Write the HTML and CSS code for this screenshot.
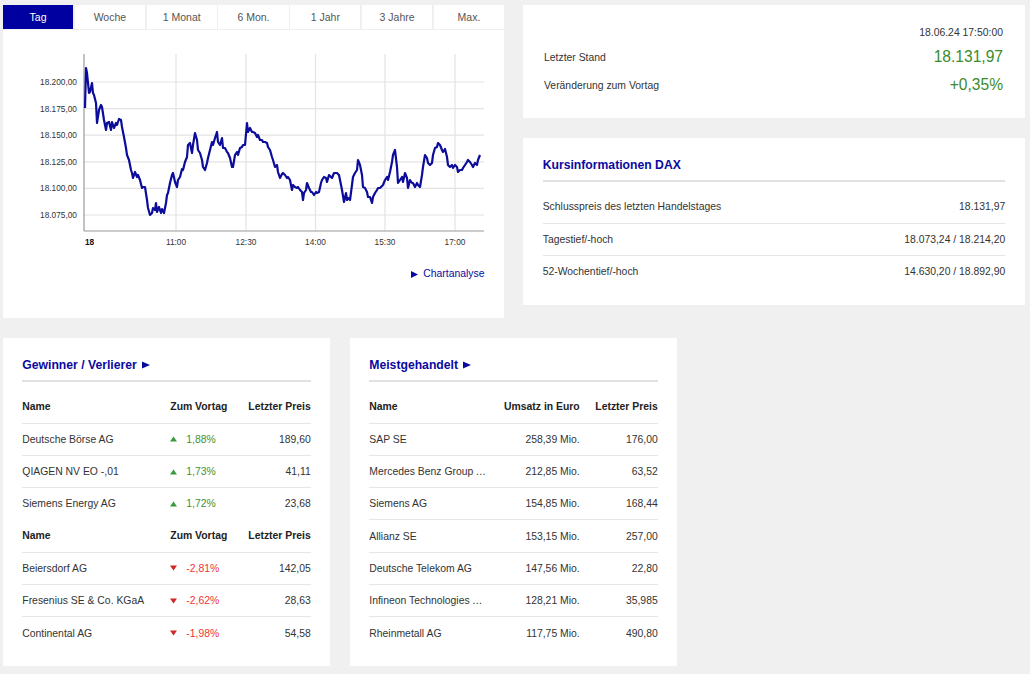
FILE: index.html
```html
<!DOCTYPE html>
<html lang="de">
<head>
<meta charset="utf-8">
<title>DAX</title>
<link rel="stylesheet" href="styles.css">
</head>
<body>
<div class="page">
  <div class="top">
    <div class="leftcol">
      <div class="tabs">
        <div class="tab active">Tag</div>
        <div class="tab">Woche</div>
        <div class="tab">1 Monat</div>
        <div class="tab">6 Mon.</div>
        <div class="tab">1 Jahr</div>
        <div class="tab">3 Jahre</div>
        <div class="tab">Max.</div>
      </div>
      <div class="chart-panel">
        <svg class="chart" viewBox="3 30 501 225" width="501" height="225">
          <g class="grid">
            <line x1="84" y1="82" x2="484" y2="82"/>
            <line x1="84" y1="108.6" x2="484" y2="108.6"/>
            <line x1="84" y1="135.2" x2="484" y2="135.2"/>
            <line x1="84" y1="161.8" x2="484" y2="161.8"/>
            <line x1="84" y1="188.4" x2="484" y2="188.4"/>
            <line x1="84" y1="215" x2="484" y2="215"/>
            <line x1="176" y1="54" x2="176" y2="231"/>
            <line x1="246" y1="54" x2="246" y2="231"/>
            <line x1="315.5" y1="54" x2="315.5" y2="231"/>
            <line x1="385" y1="54" x2="385" y2="231"/>
            <line x1="455" y1="54" x2="455" y2="231"/>
          </g>
          <g class="axis">
            <line x1="84" y1="54" x2="84" y2="231"/>
            <line x1="84" y1="231" x2="484" y2="231"/>
          </g>
          <g class="ylab">
            <text x="77" y="85">18.200,00</text>
            <text x="77" y="111.6">18.175,00</text>
            <text x="77" y="138.2">18.150,00</text>
            <text x="77" y="164.8">18.125,00</text>
            <text x="77" y="191.4">18.100,00</text>
            <text x="77" y="218">18.075,00</text>
          </g>
          <g class="xlab">
            <text class="day" x="85" y="244.5">18</text>
            <text x="176" y="244.5">11:00</text>
            <text x="246" y="244.5">12:30</text>
            <text x="315.5" y="244.5">14:00</text>
            <text x="385" y="244.5">15:30</text>
            <text x="455" y="244.5">17:00</text>
          </g>
          <polyline class="line" points="85,108 86,68 87,73 89,93 90,92 92,83 93,93 94,95 96,103 97,123 99,110 101,105 102,107 104,120 106,130 107,123 109,122 111,130 112,122 114,128 116,123 117,125 119,119 121,120 122,127 124,137 126,148 127,155 129,160 131,170 132,173 133,178 135,172 137,177 138,175 140,180 142,188 143,187 145,187 147,200 148,208 150,215 152,213 153,208 155,210 156,203 157,212 159,207 161,213 162,209 164,213 166,203 167,195 168,193 170,183 172,175 173,173 175,182 177,187 178,180 180,177 182,169 183,170 185,162 187,157 188,145 190,143 192,153 193,145 195,133 197,140 198,150 200,153 202,160 203,167 205,170 207,163 208,158 210,150 212,142 213,145 215,138 217,132 218,142 220,145 222,138 223,148 225,148 227,152 228,153 230,158 232,167 233,167 235,155 237,152 238,155 240,148 242,147 243,145 245,145 247,123 248,132 250,128 252,132 253,132 255,133 257,137 258,135 260,140 262,140 263,142 265,142 267,143 268,147 270,150 272,157 273,160 275,167 277,165 278,172 280,178 282,174 283,173 285,175 287,178 288,177 290,180 292,190 293,185 295,187 297,188 298,187 300,190 302,192 303,200 304,193 306,190 307,183 309,188 311,192 312,192 314,195 316,192 317,193 319,192 321,183 322,180 324,177 326,178 327,182 329,175 331,177 332,178 334,173 336,173 337,173 339,175 341,185 342,190 344,202 346,193 347,200 348,198 350,200 352,185 353,177 355,173 357,170 358,160 360,165 362,175 363,187 365,188 367,192 368,197 370,197 372,203 373,197 375,193 377,190 378,188 380,188 382,186 383,185 385,180 387,177 388,180 390,172 392,162 393,155 395,150 397,167 398,183 400,180 402,177 403,182 405,173 407,178 408,188 410,180 412,183 413,183 415,187 417,183 418,185 420,187 422,175 423,167 425,155 427,158 428,163 430,165 432,163 433,155 435,148 437,147 438,143 440,145 442,150 443,152 445,149 447,157 448,165 450,167 452,165 453,168 455,165 457,167 458,172 460,170 462,170 463,168 465,165 467,162 468,160 470,162 472,165 473,167 475,163 477,165 478,160 480,155"/>
        </svg>
        <div class="chart-link">
          <svg class="tri-r" width="7" height="7" viewBox="0 0 7 7"><polygon points="0,0 7,3.5 0,7"/></svg>
          <span>Chartanalyse</span>
        </div>
      </div>
    </div>
    <div class="rightcol">
      <div class="card quote">
        <div class="date">18.06.24 17:50:00</div>
        <div class="qrow qrow1"><span>Letzter Stand</span><span class="big">18.131,97</span></div>
        <div class="qrow qrow2"><span>Veränderung zum Vortag</span><span class="big">+0,35%</span></div>
      </div>
      <div class="card info">
        <div class="ctitle">Kursinformationen DAX</div>
        <div class="list">
          <div class="irow"><span>Schlusspreis des letzten Handelstages</span><span>18.131,97</span></div>
          <div class="irow"><span>Tagestief/-hoch</span><span>18.073,24 / 18.214,20</span></div>
          <div class="irow"><span>52-Wochentief/-hoch</span><span>14.630,20 / 18.892,90</span></div>
        </div>
      </div>
    </div>
  </div>

  <div class="bottom">
    <div class="card tcard gv">
      <div class="ctitle">Gewinner / Verlierer <svg class="tri-t" width="8" height="8" viewBox="0 0 8 8"><polygon points="0,0.5 8,4 0,7.5"/></svg></div>
      <div class="list">
        <div class="trow th"><span>Name</span><span>Zum Vortag</span><span class="r">Letzter Preis</span></div>
        <div class="trow"><span>Deutsche Börse AG</span><span class="chg up"><svg width="7" height="6" viewBox="0 0 7 6"><polygon points="3.5,0.5 7,5.5 0,5.5"/></svg>1,88%</span><span class="r">189,60</span></div>
        <div class="trow"><span>QIAGEN NV EO -,01</span><span class="chg up"><svg width="7" height="6" viewBox="0 0 7 6"><polygon points="3.5,0.5 7,5.5 0,5.5"/></svg>1,73%</span><span class="r">41,11</span></div>
        <div class="trow"><span>Siemens Energy AG</span><span class="chg up"><svg width="7" height="6" viewBox="0 0 7 6"><polygon points="3.5,0.5 7,5.5 0,5.5"/></svg>1,72%</span><span class="r">23,68</span></div>
        <div class="trow th noline"><span>Name</span><span>Zum Vortag</span><span class="r">Letzter Preis</span></div>
        <div class="trow"><span>Beiersdorf AG</span><span class="chg down"><svg width="7" height="6" viewBox="0 0 7 6"><polygon points="0,0.5 7,0.5 3.5,5.5"/></svg>-2,81%</span><span class="r">142,05</span></div>
        <div class="trow"><span>Fresenius SE &amp; Co. KGaA</span><span class="chg down"><svg width="7" height="6" viewBox="0 0 7 6"><polygon points="0,0.5 7,0.5 3.5,5.5"/></svg>-2,62%</span><span class="r">28,63</span></div>
        <div class="trow"><span>Continental AG</span><span class="chg down"><svg width="7" height="6" viewBox="0 0 7 6"><polygon points="0,0.5 7,0.5 3.5,5.5"/></svg>-1,98%</span><span class="r">54,58</span></div>
      </div>
    </div>
    <div class="card tcard mg">
      <div class="ctitle">Meistgehandelt <svg class="tri-t" width="8" height="8" viewBox="0 0 8 8"><polygon points="0,0.5 8,4 0,7.5"/></svg></div>
      <div class="list">
        <div class="trow th"><span>Name</span><span class="r">Umsatz in Euro</span><span class="r">Letzter Preis</span></div>
        <div class="trow"><span class="nm">SAP SE</span><span class="r">258,39 Mio.</span><span class="r">176,00</span></div>
        <div class="trow"><span class="nm">Mercedes Benz Group AG</span><span class="r">212,85 Mio.</span><span class="r">63,52</span></div>
        <div class="trow"><span class="nm">Siemens AG</span><span class="r">154,85 Mio.</span><span class="r">168,44</span></div>
        <div class="trow"><span class="nm">Allianz SE</span><span class="r">153,15 Mio.</span><span class="r">257,00</span></div>
        <div class="trow"><span class="nm">Deutsche Telekom AG</span><span class="r">147,56 Mio.</span><span class="r">22,80</span></div>
        <div class="trow"><span class="nm">Infineon Technologies AG</span><span class="r">128,21 Mio.</span><span class="r">35,985</span></div>
        <div class="trow"><span class="nm">Rheinmetall AG</span><span class="r">117,75 Mio.</span><span class="r">490,80</span></div>
      </div>
    </div>
  </div>
</div>
</body>
</html>
```

FILE: styles.css
```css
* { box-sizing: border-box; margin: 0; padding: 0; }

body {
  background: #f0f0f0;
  font-family: "Liberation Sans", Arial, sans-serif;
  font-size: 10.4px;
  color: #333;
}

.page {
  width: 1030px;
  padding: 5px 0 0 3px;
}

.top {
  display: grid;
  grid-template-columns: 501px 502px;
  column-gap: 19px;
  align-items: start;
}

.tabs {
  display: grid;
  grid-template-columns: repeat(7, 1fr);
  column-gap: 1.7px;
  height: 24px;
}

.tab {
  background: #fff;
  color: #555;
  font-size: 10.5px;
  display: flex;
  align-items: center;
  justify-content: center;
}

.tab.active {
  background: #0000a0;
  color: #fff;
}

.chart-panel {
  background: #fff;
  margin-top: 1px;
  height: 288px;
}

.chart {
  display: block;
}

.grid line {
  stroke: #e3e3e3;
  stroke-width: 1.2;
}

.axis line {
  stroke: #9a9a9a;
  stroke-width: 1.2;
}

.ylab text {
  font-family: "Liberation Sans", Arial, sans-serif;
  font-size: 8.3px;
  fill: #333;
  text-anchor: end;
}

.xlab text {
  font-family: "Liberation Sans", Arial, sans-serif;
  font-size: 8.3px;
  fill: #333;
  text-anchor: middle;
}

.xlab .day {
  text-anchor: start;
  font-weight: bold;
  fill: #111;
}

.line {
  fill: none;
  stroke: #0c0c9a;
  stroke-width: 2.2;
  stroke-linejoin: round;
}

.chart-link {
  margin-top: 12.3px;
  padding-right: 19.5px;
  display: flex;
  justify-content: flex-end;
  align-items: center;
  gap: 5px;
  line-height: 14px;
  color: #0a0aa0;
}

.tri-r polygon,
.tri-t polygon {
  fill: #0a0aa0;
}

.rightcol {
  display: flex;
  flex-direction: column;
  gap: 19.7px;
}

.card {
  background: #fff;
}

.quote {
  padding: 21px 22px 23.3px 21px;
}

.date {
  text-align: right;
  line-height: 14px;
}

.qrow {
  display: flex;
  justify-content: space-between;
  align-items: center;
  height: 20px;
}

.qrow1 { margin-top: 7px; }
.qrow2 { margin-top: 8px; }

.big {
  font-size: 15.6px;
  color: #3b8c2c;
}

.info {
  padding: 20.3px 19.7px 17.7px 19.7px;
}

.ctitle {
  font-size: 12.2px;
  font-weight: bold;
  color: #0a0aa0;
  line-height: 14px;
  padding-bottom: 8px;
  border-bottom: 2px solid #e2e2e2;
}

.tri-t {
  margin-left: 2px;
  vertical-align: 0px;
}

.list {
  margin-top: 8px;
}

.irow {
  display: flex;
  justify-content: space-between;
  align-items: center;
  height: 32.3px;
}

.irow + .irow {
  border-top: 1px solid #e6e6e6;
}

.bottom {
  display: flex;
  gap: 20px;
  margin-top: 20px;
}

.tcard {
  width: 327px;
  padding: 20.3px 19.3px 17.6px 19.3px;
}

.trow {
  display: grid;
  align-items: center;
  height: 32.3px;
}

.trow + .trow {
  border-top: 1px solid #e6e6e6;
}

.trow.noline {
  border-top: none;
}

.gv .trow {
  grid-template-columns: 148px 1fr auto;
}

.mg .trow {
  grid-template-columns: 117.2px 1fr 78px;
}

.th {
  font-weight: bold;
  color: #222;
}

.r {
  text-align: right;
}

.nm {
  white-space: nowrap;
  overflow: hidden;
  text-overflow: ellipsis;
}

.chg {
  display: flex;
  align-items: center;
  gap: 9px;
}

.chg.up { color: #3d9232; }
.chg.up polygon { fill: #3a9a3a; }
.chg.down { color: #ee3535; }
.chg.down polygon { fill: #d02626; }
```
